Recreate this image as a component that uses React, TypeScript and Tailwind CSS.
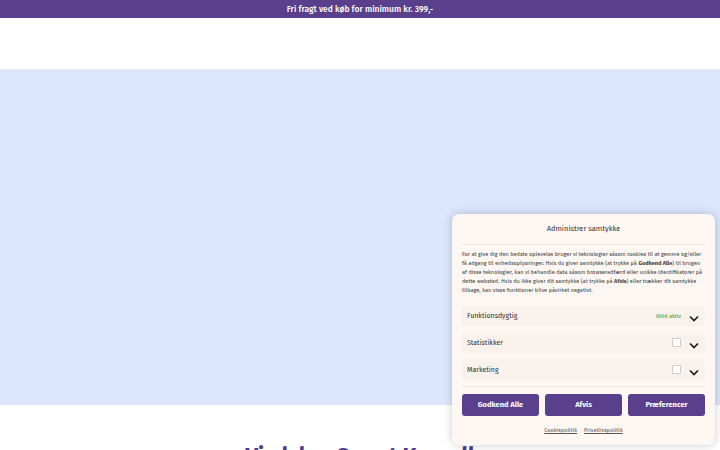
import React from "react";

const font = { fontFamily: '"Fira Sans", "Noto Sans", "Open Sans", sans-serif' };

function Chevron() {
  return (
    <svg width="10" height="7" viewBox="0 0 10 7" className="mt-[5px]">
      <path d="M1 1.5 L5 5.5 L9 1.5" fill="none" stroke="#1b1b1b" strokeWidth="1.6" />
    </svg>
  );
}

function Row({ label, active }: { label: string; active?: boolean }) {
  return (
    <div className="flex h-[20px] items-center justify-between rounded-[3px] bg-[#f8f1ec] pl-[5px] pr-[6px]">
      <span className="text-[7px] text-[#333]">{label}</span>
      <div className="flex items-center gap-[8px]">
        {active ? (
          <span className="text-[5.5px] text-[#2e9a2e]">Altid aktiv</span>
        ) : (
          <span className="mb-[2px] h-[9px] w-[9px] rounded-[1px] border border-[#ccc] bg-white" />
        )}
        <Chevron />
      </div>
    </div>
  );
}

export default function App() {
  return (
    <div className="relative h-[450px] w-[720px] overflow-hidden bg-white" style={font}>
      <div className="flex h-[18px] items-center justify-center bg-[#5a3f8c] text-[8.5px] font-medium text-white">
        Fri fragt ved køb for minimum kr. 399,-
      </div>
      <header className="h-[52px] border-b border-[#eeeeee] bg-white" />
      <section className="h-[335px] bg-[#dbe6fd]" />
      <div className="flex justify-center pt-[40px]">
        <h2 className="text-[22px] font-bold leading-none text-[#4b3b8a]">Vi elsker Smart Kassell</h2>
      </div>

      <div className="absolute left-[452px] top-[214px] w-[263px] rounded-[7px] bg-[#fcf7f3] px-[10px] shadow-[0_0_10px_rgba(0,0,0,0.2)]">
        <div className="flex h-[31px] items-center justify-center border-b border-[#efe8e2] text-[7.5px] text-[#333]">
          Administrer samtykke
        </div>
        <p className="pt-[5px] text-[5.6px] leading-[9px] text-[#3a3a3a]">
          For at give dig den bedste oplevelse bruger vi teknologier såsom cookies til at gemme og/eller få adgang til enhedsoplysninger. Hvis du giver samtykke (at trykke på <b>Godkend Alle</b>) til brugen af disse teknologier, kan vi behandle data såsom browseradfærd eller unikke identifikatorer på dette websted. Hvis du ikke giver dit samtykke (at trykke på <b>Afvis</b>) eller trækker dit samtykke tilbage, kan visse funktioner blive påvirket negativt.
        </p>
        <div className="mt-[11px] flex flex-col gap-[7px] border-b border-[#efe8e2] pb-[6px]">
          <Row label="Funktionsdygtig" active />
          <Row label="Statistikker" />
          <Row label="Marketing" />
        </div>
        <div className="mt-[7px] grid grid-cols-3 gap-[6px]">
          {["Godkend Alle", "Afvis", "Præferencer"].map((t) => (
            <button
              key={t}
              className="flex h-[22px] items-center justify-center rounded-[3px] bg-[#5a3f8c] text-[7.5px] font-bold text-white"
            >
              {t}
            </button>
          ))}
        </div>
        <div className="flex h-[29px] items-center justify-center gap-[7px] text-[5.5px] text-[#555] underline">
          <span>Cookiepolitik</span>
          <span>Privatlivspolitik</span>
        </div>
      </div>
    </div>
  );
}
